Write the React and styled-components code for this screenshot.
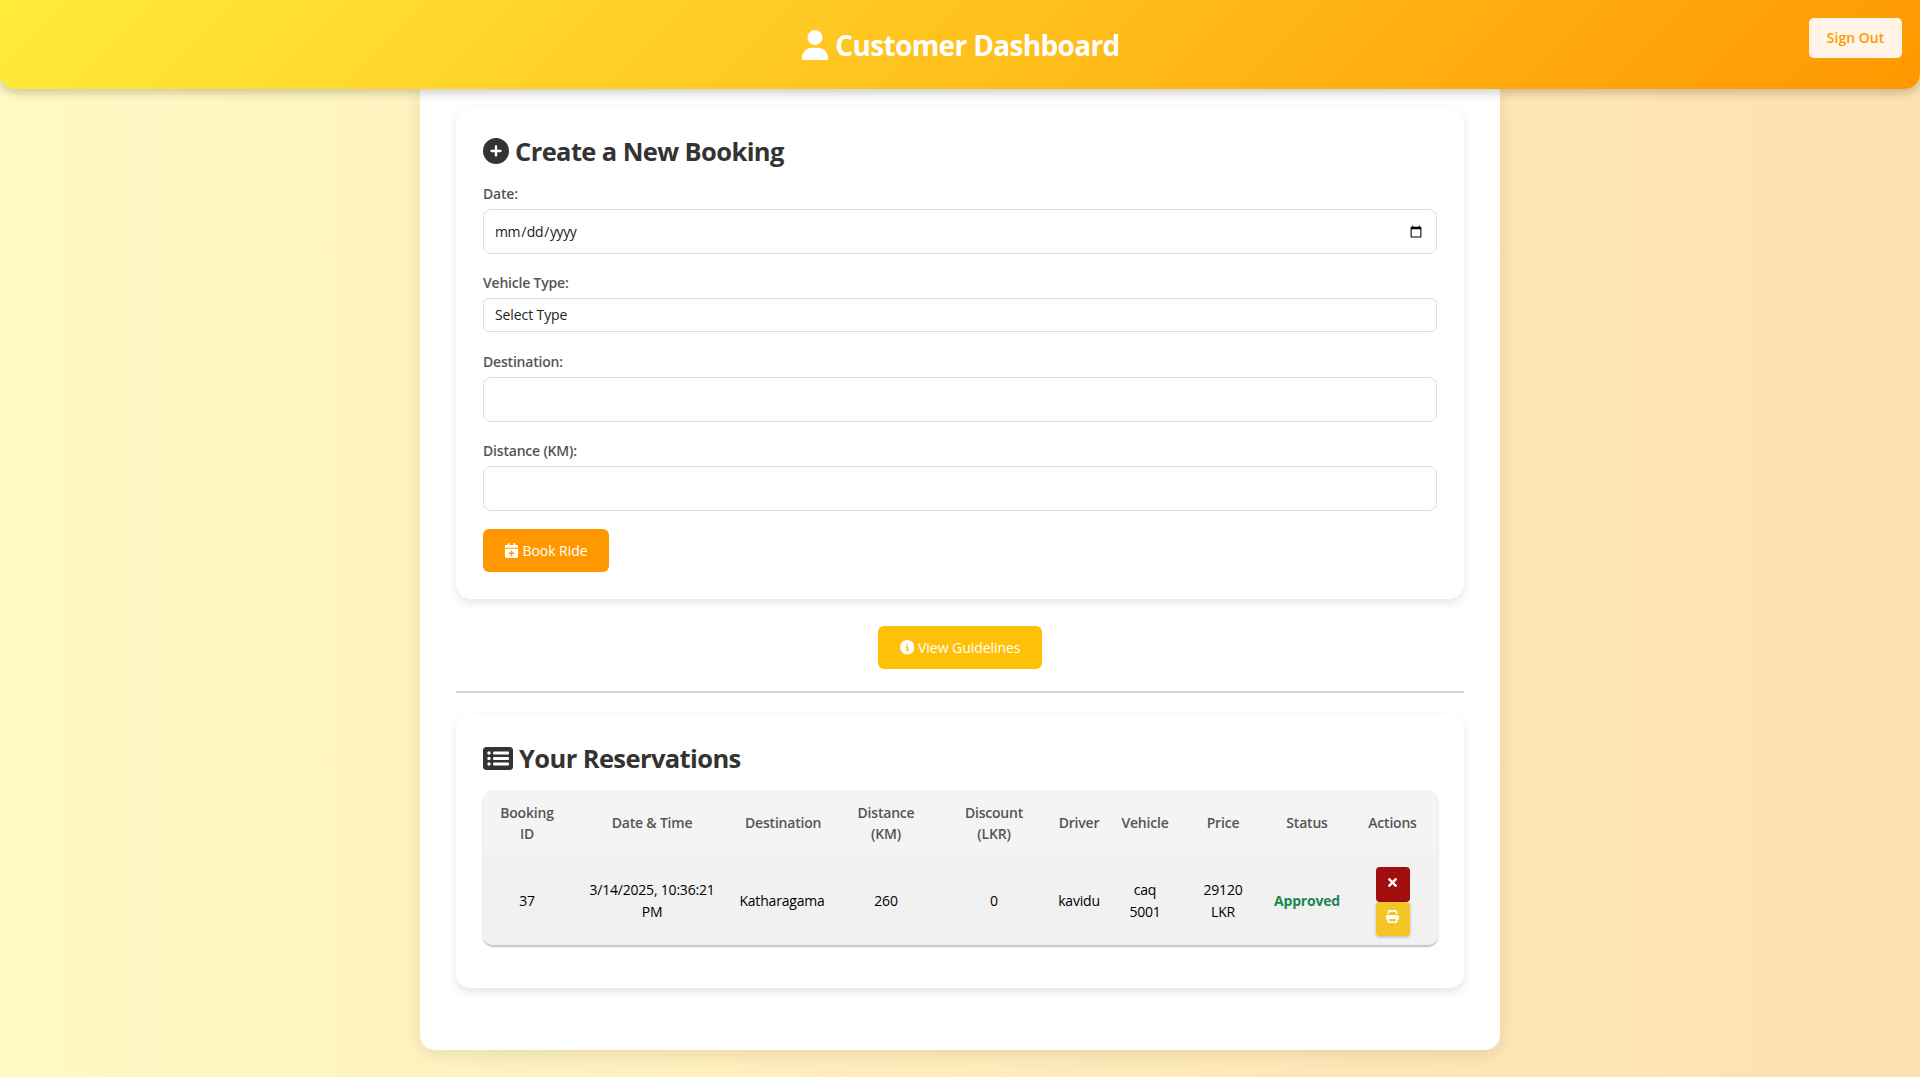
import React from "react";
import styled, { createGlobalStyle } from "styled-components";
import { FaTimes } from "react-icons/fa";
import {
  FaUser,
  FaCirclePlus,
  FaCalendarPlus,
  FaCircleInfo,
  FaPrint,
} from "react-icons/fa6";

const FONT = `"Open Sans", "Noto Sans", "Liberation Sans", sans-serif`;

const GlobalStyle = createGlobalStyle`
  * { box-sizing: border-box; }
  html, body { margin: 0; padding: 0; }
  body {
    min-height: 1077px;
    font-family: ${FONT};
    background: linear-gradient(90deg, #fff9c4, #ffe0b2);
  }
`;

const headings = [
  { label: "Booking ID", width: 88 },
  { label: "Date & Time", width: 162 },
  { label: "Destination", width: 98 },
  { label: "Distance (KM)", width: 110 },
  { label: "Discount (LKR)", width: 106 },
  { label: "Driver", width: 64, tight: true },
  { label: "Vehicle", width: 68, tight: true },
  { label: "Price", width: 88 },
  { label: "Status", width: 80 },
  { label: "Actions", width: 91 },
];

function Field({ label, children }) {
  return (
    <FieldWrap>
      <Label>{label}</Label>
      {children}
    </FieldWrap>
  );
}

function ListIcon() {
  return (
    <svg width="30" height="23" viewBox="0 0 30 23">
      <rect width="30" height="23" rx="3.5" fill="#333" />
      <g fill="#fff">
        <circle cx="6" cy="6" r="1.7" />
        <circle cx="6" cy="11.5" r="1.7" />
        <circle cx="6" cy="17" r="1.7" />
        <rect x="10" y="4.6" width="16" height="2.8" rx="1" />
        <rect x="10" y="10.1" width="16" height="2.8" rx="1" />
        <rect x="10" y="15.6" width="16" height="2.8" rx="1" />
      </g>
    </svg>
  );
}

export default function App() {
  return (
    <>
      <GlobalStyle />
      <Header>
        <HeaderTitle>
          <FaUser />
          Customer Dashboard
        </HeaderTitle>
        <SignOut>Sign Out</SignOut>
      </Header>
      <Container>
        <Card>
          <Title>
            <FaCirclePlus />
            Create a New Booking
          </Title>
          <Field label="Date:">
            <DateInput type="date" />
          </Field>
          <Field label="Vehicle Type:">
            <Select defaultValue="">
              <option value="">Select Type</option>
            </Select>
          </Field>
          <Field label="Destination:">
            <Input type="text" />
          </Field>
          <Field label="Distance (KM):">
            <Input type="number" />
          </Field>
          <BookButton>
            <FaCalendarPlus />
            Book Ride
          </BookButton>
        </Card>

        <GuideRow>
          <GuideButton>
            <FaCircleInfo />
            View Guidelines
          </GuideButton>
        </GuideRow>
        <Divider />

        <ReservationCard>
          <Title>
            <ListIcon />
            Your Reservations
          </Title>
          <Table>
            <colgroup>
              {headings.map((h) => (
                <col key={h.label} width={h.width} />
              ))}
            </colgroup>
            <thead>
              <tr>
                {headings.map((h) => (
                  <Th key={h.label} $tight={h.tight}>
                    {h.label}
                  </Th>
                ))}
              </tr>
            </thead>
            <tbody>
              <tr>
                <Td>37</Td>
                <Td>3/14/2025, 10:36:21 PM</Td>
                <Td $tight>Katharagama</Td>
                <Td>260</Td>
                <Td>0</Td>
                <Td $tight>kavidu</Td>
                <Td>caq 5001</Td>
                <Td>29120 LKR</Td>
                <Td $tight>
                  <Approved>Approved</Approved>
                </Td>
                <Td>
                  <ActionStack>
                    <CancelButton>
                      <FaTimes />
                    </CancelButton>
                    <PrintButton>
                      <FaPrint />
                    </PrintButton>
                  </ActionStack>
                </Td>
              </tr>
            </tbody>
          </Table>
        </ReservationCard>
      </Container>
    </>
  );
}

const Header = styled.header`
  position: relative;
  z-index: 2;
  height: 89px;
  display: flex;
  align-items: center;
  justify-content: center;
  background: linear-gradient(135deg, #ffeb3b, #ff9800);
  border-radius: 0 0 15px 15px;
  box-shadow: 0 4px 10px rgba(0, 0, 0, 0.2);
`;

const HeaderTitle = styled.h1`
  margin: 0;
  display: flex;
  align-items: center;
  gap: 5px;
  color: #fff;
  font-size: 28px;
  font-weight: 700;
  letter-spacing: -0.65px;
  svg {
    font-size: 30px;
  }
`;

const SignOut = styled.button`
  position: absolute;
  top: 18px;
  right: 18px;
  width: 93px;
  height: 40px;
  padding: 0 0 2px;
  border: none;
  border-radius: 5px;
  background: #fff4e6;
  color: #ff9800;
  font-family: ${FONT};
  font-size: 14px;
  font-weight: 600;
`;

const Container = styled.main`
  width: 1080px;
  height: 961px;
  margin: 0 auto;
  padding: 18px 36px 0;
  background: #fff;
  border-radius: 0 0 15px 15px;
  box-shadow: 0 4px 20px rgba(0, 0, 0, 0.1);
`;

const Card = styled.section`
  height: 492px;
  padding: 27px;
  background: #fff;
  border-radius: 15px;
  box-shadow: 0 4px 10px rgba(0, 0, 0, 0.1);
`;

const Title = styled.h2`
  margin: 0 0 15px;
  display: flex;
  align-items: center;
  gap: 6px;
  color: #333;
  font-size: 25.5px;
  font-weight: 700;
  letter-spacing: -0.6px;
  line-height: 34px;
  svg {
    font-size: 26px;
  }
`;

const FieldWrap = styled.div`
  margin-bottom: 18px;
`;

const Label = styled.label`
  display: block;
  margin-bottom: 6px;
  padding-top: 1px;
  color: #555;
  font-size: 14px;
  font-weight: 600;
  letter-spacing: -0.2px;
  line-height: 19px;
`;

const Input = styled.input`
  display: block;
  width: 100%;
  height: 45px;
  padding: 0 11px;
  border: 1px solid #ddd;
  border-radius: 8px;
  background: #fff;
  color: #222;
  font-family: ${FONT};
  font-size: 14px;
`;

const DateInput = styled(Input)`
  padding: 0 11px 0 10px;
  letter-spacing: -0.4px;
`;

const Select = styled.select`
  display: block;
  width: 100%;
  height: 34px;
  margin-bottom: 19px;
  padding: 0 11px 1px;
  border: 1px solid #ddd;
  border-radius: 6px;
  background: #fff;
  color: #222;
  font-family: ${FONT};
  font-size: 14px;
  letter-spacing: -0.1px;
  appearance: none;
`;

const ActionButton = styled.button`
  display: inline-flex;
  align-items: center;
  justify-content: center;
  gap: 4px;
  height: 43px;
  border: none;
  border-radius: 6px;
  color: #fff;
  font-family: ${FONT};
  font-size: 14px;
  letter-spacing: -0.05px;
`;

const BookButton = styled(ActionButton)`
  width: 126px;
  gap: 3px;
  background: #ff9800;
  svg {
    font-size: 15px;
  }
`;

const GuideRow = styled.div`
  display: flex;
  justify-content: center;
  margin-top: 27px;
`;

const GuideButton = styled(ActionButton)`
  width: 164px;
  background: #ffc107;
  svg {
    font-size: 14.5px;
  }
`;

const Divider = styled.hr`
  margin: 22px 0 21px;
  border: none;
  border-top: 2px solid #d5d5d5;
`;

const ReservationCard = styled(Card)`
  height: 274px;
`;

const Table = styled.table`
  width: 955px;
  table-layout: fixed;
  border-collapse: separate;
  border-spacing: 0;
  border-radius: 10px;
  overflow: hidden;
  box-shadow: 0 2px 2px rgba(0, 0, 0, 0.25);
`;

const Th = styled.th`
  height: 65px;
  padding: 0 ${(props) => (props.$tight ? "2px" : "12px")};
  background: #f4f4f4;
  color: #555;
  font-size: 14px;
  font-weight: 600;
  letter-spacing: -0.2px;
  line-height: 21px;
  text-align: center;
`;

const Td = styled.td`
  height: 90px;
  padding: 2px ${(props) => (props.$tight ? "2px" : "12px")} 0;
  background: #f1f1f1;
  color: #000;
  font-size: 14px;
  letter-spacing: -0.2px;
  line-height: 22px;
  text-align: center;
`;

const Approved = styled.span`
  color: #198754;
  font-weight: 700;
`;

const ActionStack = styled.div`
  display: flex;
  flex-direction: column;
  align-items: center;
`;

const SmallButton = styled.button`
  display: flex;
  align-items: center;
  justify-content: center;
  width: 34px;
  height: 35px;
  padding: 0 0 4px;
  border: none;
  border-radius: 4px;
  color: #fff;
  font-size: 13px;
`;

const CancelButton = styled(SmallButton)`
  background: #a00e0e;
`;

const PrintButton = styled(SmallButton)`
  height: 34px;
  background: #f4c527;
  box-shadow: 0 1px 3px rgba(0, 0, 0, 0.25);
`;
